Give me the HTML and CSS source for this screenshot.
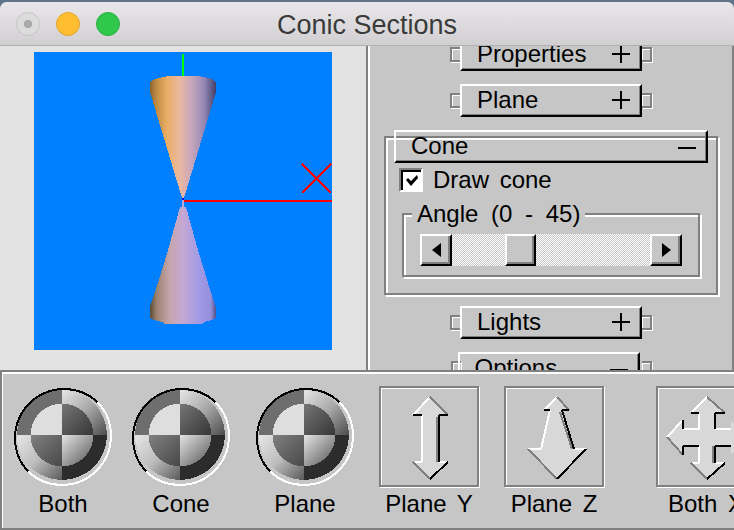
FILE: index.html
```html
<!DOCTYPE html>
<html lang="en">
<head>
  <meta charset="UTF-8">
  <title>Conic Sections</title>
  <link rel="stylesheet" href="styles.css">
</head>
<body>
  <svg class="defs" width="0" height="0">
    <defs>
      <linearGradient id="cone-top" gradientUnits="userSpaceOnUse" x1="150" y1="0" x2="216" y2="0">
        <stop offset="0" stop-color="#8a6630"/>
        <stop offset="0.1" stop-color="#c08c45"/>
        <stop offset="0.25" stop-color="#e8ad62"/>
        <stop offset="0.45" stop-color="#ebb8a0"/>
        <stop offset="0.62" stop-color="#c9a8bc"/>
        <stop offset="0.82" stop-color="#9488b4"/>
        <stop offset="1" stop-color="#40406c"/>
      </linearGradient>
      <linearGradient id="cone-bottom" gradientUnits="userSpaceOnUse" x1="150" y1="0" x2="216" y2="0">
        <stop offset="0" stop-color="#5c4a30"/>
        <stop offset="0.1" stop-color="#9c8270"/>
        <stop offset="0.3" stop-color="#c6a6ac"/>
        <stop offset="0.5" stop-color="#c4a8d4"/>
        <stop offset="0.75" stop-color="#a09ae6"/>
        <stop offset="0.92" stop-color="#9690dc"/>
        <stop offset="1" stop-color="#50508c"/>
      </linearGradient>
      <linearGradient id="ring-tr" x1="0" y1="0" x2="1" y2="1">
        <stop offset="0" stop-color="#e6e6e6"/>
        <stop offset="0.5" stop-color="#a8a8a8"/>
        <stop offset="1" stop-color="#4c4c4c"/>
      </linearGradient>
      <linearGradient id="ring-bl" x1="0" y1="0" x2="1" y2="1">
        <stop offset="0" stop-color="#e6e6e6"/>
        <stop offset="0.5" stop-color="#bdbdbd"/>
        <stop offset="1" stop-color="#5a5a5a"/>
      </linearGradient>
      <linearGradient id="ball-tr" x1="0" y1="0" x2="1" y2="1">
        <stop offset="0" stop-color="#767676"/>
        <stop offset="1" stop-color="#363636"/>
      </linearGradient>
      <linearGradient id="ball-bl" x1="0" y1="0" x2="1" y2="1">
        <stop offset="0" stop-color="#808080"/>
        <stop offset="1" stop-color="#484848"/>
      </linearGradient>
      <linearGradient id="ball-br" x1="0" y1="0" x2="1" y2="1">
        <stop offset="0" stop-color="#e4e4e4"/>
        <stop offset="1" stop-color="#525252"/>
      </linearGradient>
      <symbol id="ball" viewBox="0 0 100 100">
        <path d="M49 48V3A45 45 0 0 0 4 48Z" fill="#6e6e6e"/>
        <path d="M49 48V3A45 45 0 0 1 94 48Z" fill="url(#ring-tr)"/>
        <path d="M49 48H4A45 45 0 0 0 49 93Z" fill="url(#ring-bl)"/>
        <path d="M49 48H94A45 45 0 0 1 49 93Z" fill="#2c2c2c"/>
        <path d="M49 48V16.500A31.500 31.500 0 0 0 17.500 48Z" fill="#dedede"/>
        <path d="M49 48V16.500A31.500 31.500 0 0 1 80.500 48Z" fill="url(#ball-tr)"/>
        <path d="M49 48H17.500A31.500 31.500 0 0 0 49 79.500Z" fill="url(#ball-bl)"/>
        <path d="M49 48H80.500A31.500 31.500 0 0 1 49 79.500Z" fill="url(#ball-br)"/>
        <path d="M15.300 84.700A49.100 49.100 0 0 1 84.700 15.300" fill="none" stroke="#000" stroke-width="2"/>
        <path d="M84.700 15.300A49.100 49.100 0 0 1 15.300 84.700" fill="none" stroke="#fff" stroke-width="2"/>
      </symbol>
    </defs>
  </svg>

  <div class="window">
    <div class="titlebar">
      <div class="lights">
        <span class="light light-close"></span>
        <span class="light light-min"></span>
        <span class="light light-max"></span>
      </div>
      <div class="title">Conic Sections</div>
    </div>

    <div class="main">
      <div class="view">
        <svg class="scene" width="298" height="298" viewBox="34 52 298 298" shape-rendering="crispEdges">
          <rect x="182" y="54" width="2" height="22" fill="#00ff00"/>
          <polygon fill="url(#cone-top)" points="168,76 198,76 208,78 214,80 216,83 216,92 184,198 182,198 150,92 150,83 152,80 158,78"/>
          <rect x="182" y="198" width="2" height="2" fill="#0000ff"/>
          <rect x="184" y="200" width="148" height="2" fill="#ff0000"/>
          <polygon fill="url(#cone-bottom)" points="182,200 184,200 184,207 186,207 198,250 208,283 216,307 216,318 212,320 204,322 202,324 164,324 162,322 154,320 150,318 150,307 158,283 168,250 180,207 182,207"/>
          <line x1="302" y1="164" x2="331" y2="193" stroke="#ff0000" stroke-width="1.500"/>
          <line x1="331" y1="164" x2="302" y2="193" stroke="#ff0000" stroke-width="1.500"/>
        </svg>
      </div>

      <div class="panel">
        <div class="rollout rollout-first">
          <span class="stub stub-left"></span>
          <div class="bar"><span>Properties</span><svg class="sign" width="18" height="18"><path d="M0 8h18v2H0zM8 0h2v18H8z"/></svg></div>
          <span class="stub stub-right"></span>
        </div>
        <div class="rollout">
          <span class="stub stub-left"></span>
          <div class="bar"><span>Plane</span><svg class="sign" width="18" height="18"><path d="M0 8h18v2H0zM8 0h2v18H8z"/></svg></div>
          <span class="stub stub-right"></span>
        </div>

        <div class="group">
          <div class="bar bar-wide"><span>Cone</span><svg class="sign" width="18" height="18"><path d="M0 10h18v2H0z"/></svg></div>
          <label class="check-row">
            <span class="checkbox"><svg width="16" height="16" viewBox="0 0 16 16"><path d="M2 7l2-2 3 3 6-6 1 3-7 8z"/></svg></span>
            <span>Draw cone</span>
          </label>
          <fieldset class="angle">
            <legend>Angle (0 - 45)</legend>
            <div class="slider">
              <div class="slider-btn"><span class="tri tri-left"></span></div>
              <div class="trough"></div>
              <div class="slider-btn slider-thumb"></div>
              <div class="trough trough-long"></div>
              <div class="slider-btn"><span class="tri tri-right"></span></div>
            </div>
          </fieldset>
        </div>

        <div class="rollout rollout-lights">
          <span class="stub stub-left"></span>
          <div class="bar"><span>Lights</span><svg class="sign" width="18" height="18"><path d="M0 8h18v2H0zM8 0h2v18H8z"/></svg></div>
          <span class="stub stub-right"></span>
        </div>
        <div class="rollout rollout-open">
          <span class="stub stub-left"></span>
          <div class="bar"><span>Options</span><svg class="sign" width="18" height="18"><path d="M0 10h18v2H0z"/></svg></div>
          <span class="stub stub-right"></span>
        </div>
      </div>
    </div>

    <div class="toolbar">
      <div class="tool tool-close">
        <svg class="ball" width="100" height="100" shape-rendering="crispEdges"><use href="#ball"/></svg>
        <div class="tool-label">Both</div>
      </div>
      <div class="tool">
        <svg class="ball" width="100" height="100" shape-rendering="crispEdges"><use href="#ball"/></svg>
        <div class="tool-label">Cone</div>
      </div>
      <div class="tool">
        <svg class="ball" width="100" height="100" shape-rendering="crispEdges"><use href="#ball"/></svg>
        <div class="tool-label">Plane</div>
      </div>
      <div class="tool tool-y">
        <div class="arrow-box">
          <svg width="96" height="97" viewBox="2 2 96 97" shape-rendering="crispEdges" fill="none" stroke-width="2">
            <path d="M51 11L69 29H60V76H69L51 93L34 76H43V29H34Z" fill="#d8d8d8"/>
            <path d="M34 29L51 11M43 29V76M34 76H43M60 76H69" stroke="#fff"/>
            <path d="M51 11L69 29M34 76L51 93M58 31V76" stroke="#808080"/>
            <path d="M34 29H43M60 29H69M60 29V76M51 93L69 76" stroke="#000"/>
          </svg>
        </div>
        <div class="tool-label">Plane Y</div>
      </div>
      <div class="tool">
        <div class="arrow-box">
          <svg width="96" height="97" viewBox="2 2 96 97" shape-rendering="crispEdges" fill="none" stroke-width="2">
            <path d="M53 11L65 24H58L70 63H82L53 93L24 63H37L46 24H40Z" fill="#d8d8d8"/>
            <path d="M40 24L53 11M46 24L37 63M24 63H37M70 63H82" stroke="#fff"/>
            <path d="M53 11L65 24M24 63L53 93M56 26L68 63" stroke="#808080"/>
            <path d="M40 24H46M58 24H65M58 24L70 63M53 93L82 63" stroke="#000"/>
          </svg>
        </div>
        <div class="tool-label">Plane Z</div>
      </div>
      <div class="tool tool-far">
        <div class="arrow-box">
          <svg width="96" height="97" viewBox="2 2 96 97" shape-rendering="crispEdges" fill="none" stroke-width="2">
            <path d="M51 11L69 27H59V43H75V34L91 51L75 69V60H59V77H69L51 93L35 77H43V60H27V69L11 51L27 34V43H43V27H35Z" fill="#d8d8d8"/>
            <path d="M35 27L51 11M43 27V43H27M27 34L11 51M43 60V77M35 77H43M59 77H69M59 43H75" stroke="#fff"/>
            <path d="M51 11L69 27M11 51L27 69M35 77L51 93M57 60V77" stroke="#808080"/>
            <path d="M35 27H43M59 27H69M59 27V43M27 34V43M27 60H43M27 60V69M59 60H75M59 60V77M51 93L69 77" stroke="#000"/>
          </svg>
        </div>
        <div class="tool-label">Both X</div>
      </div>
    </div>
  </div>
</body>
</html>
```

FILE: styles.css
```css
* {
  box-sizing: border-box;
}

body {
  margin: 0;
  height: 530px;
  overflow: hidden;
  background-color: #5f7489;
  font-family: 'Liberation Sans', Arial, sans-serif;
  font-size: 24px;
  word-spacing: 4px;
  color: #000;
}

.defs {
  display: block;
}

.window {
  margin-top: 2px;
  height: 528px;
  overflow: hidden;
  border-radius: 7px 7px 0 0;
  background-color: #c6c6c6;
}

/* title bar */
.titlebar {
  position: relative;
  height: 44px;
  padding-top: 3px;
  background: linear-gradient(#e9e7e9, #d1cfd1);
  border-bottom: 1px solid #b1b0b1;
  display: flex;
  align-items: center;
  justify-content: center;
}

.lights {
  position: absolute;
  left: 16px;
  top: 10px;
  display: flex;
  gap: 16px;
}

.light {
  width: 24px;
  height: 24px;
  border-radius: 50%;
  border: 1px solid;
}

.light-close {
  background: radial-gradient(circle, #a9a9a9 0, #a9a9a9 4px, #dcdcdc 4.500px);
  border-color: #c4c4c4;
}

.light-min {
  background-color: #ffbd30;
  border-color: #e2a42c;
}

.light-max {
  background-color: #30c84a;
  border-color: #2cae40;
}

.title {
  font-size: 27px;
  word-spacing: 0;
  color: #3a3a3a;
}

/* upper part */
.main {
  display: flex;
  height: 326px;
  border-bottom: 2px solid #808080;
}

.view {
  width: 366px;
  flex-shrink: 0;
  padding: 6px 34px;
  background-color: #e3e3e3;
}

.scene {
  display: block;
  background-color: #007fff;
}

.panel {
  flex: 1;
  overflow: hidden;
  padding-left: 2px;
  border-left: 2px solid #808080;
  border-right: 2px solid #808080;
  box-shadow: inset 2px 0 #fff;
  display: flex;
  flex-direction: column;
  align-items: center;
}

.panel > * {
  flex-shrink: 0;
}

.rollout {
  display: flex;
  align-items: center;
  margin-top: 13px;
}

.rollout-first {
  margin-top: -8px;
}

.rollout-lights {
  margin-top: 11px;
}

.stub {
  width: 10px;
  height: 15px;
  border: 2px solid #808080;
  box-shadow: inset 1px 1px #fff, 1px 1px #fff;
}

.stub-left {
  border-right: 0;
}

.stub-right {
  border-left: 0;
}

.bar {
  width: 182px;
  height: 33px;
  display: flex;
  align-items: center;
  justify-content: space-between;
  padding: 0 10px 1px 15px;
  border: 2px solid;
  border-color: #fff #000 #000 #fff;
  box-shadow: inset -1px -1px #808080;
}

.sign {
  fill: #000;
  display: block;
  margin-top: -1px;
}

.bar-wide {
  width: 314px;
  margin: -8px 0 0 8px;
}

.rollout-open .bar {
  margin: 0 2px 0 -3px;
}

.group {
  width: 334px;
  margin-top: 19px;
  border: 2px solid #808080;
  box-shadow: inset 2px 2px #fff, 2px 2px #fff;
  padding: 0 0 16px;
}

.check-row {
  display: flex;
  align-items: center;
  gap: 10px;
  margin: 5px 0 0 13px;
  height: 24px;
}

.checkbox {
  width: 24px;
  height: 24px;
  border: 2px solid;
  border-color: #808080 #fff #fff #808080;
  box-shadow: inset 2px 2px #000;
  background-color: #fff;
  display: flex;
  align-items: center;
  justify-content: center;
  padding: 2px 0 0 2px;
}

.angle {
  width: 298px;
  margin: 9px 0 0 16px;
  padding: 7px 16px 9px;
  border: 2px solid #808080;
  box-shadow: inset 2px 2px #fff, 2px 2px #fff;
  min-width: 0;
}

.angle legend {
  padding: 0 5px;
  margin-left: -8px;
  height: 26px;
  line-height: 26px;
  word-spacing: 6px;
  background-color: #c6c6c6;
}

.slider {
  display: flex;
  height: 32px;
}

.slider-btn {
  width: 32px;
  flex-shrink: 0;
  border: 2px solid;
  border-color: #fff #000 #000 #fff;
  box-shadow: inset -2px -2px #808080;
  background-color: #c6c6c6;
  display: flex;
  align-items: center;
  justify-content: center;
}

.slider-thumb {
  width: 31px;
}

.trough {
  width: 53px;
  background-color: #fff;
  background-image: repeating-conic-gradient(#c6c6c6 0 25%, #fff 0 50%);
  background-size: 2px 2px;
}

.trough-long {
  width: 114px;
}

.tri {
  width: 0;
  height: 0;
  border-top: 7px solid transparent;
  border-bottom: 7px solid transparent;
}

.tri-left {
  border-right: 9px solid #000;
}

.tri-right {
  border-left: 9px solid #000;
}

/* bottom toolbar */
.toolbar {
  height: 158px;
  display: flex;
  padding: 14px 0 0 11px;
  border-left: 2px solid #808080;
  border-bottom: 2px solid #808080;
  box-shadow: inset 1px 2px #fff;
  overflow: hidden;
}

.tool {
  width: 100px;
  flex-shrink: 0;
  margin-right: 24px;
  text-align: center;
}

.tool-close {
  margin-right: 18px;
}

.tool-y {
  margin-right: 25px;
}

.tool-far {
  margin-left: 28px;
}

.ball {
  display: block;
  margin-top: 1px;
}

.arrow-box {
  height: 101px;
  border: 2px solid #808080;
  box-shadow: inset 1px 1px #fff, 1px 1px #fff;
}

.arrow-box svg {
  display: block;
}

.tool-label {
  height: 26px;
  line-height: 26px;
  margin-top: 4px;
  white-space: nowrap;
}
```
